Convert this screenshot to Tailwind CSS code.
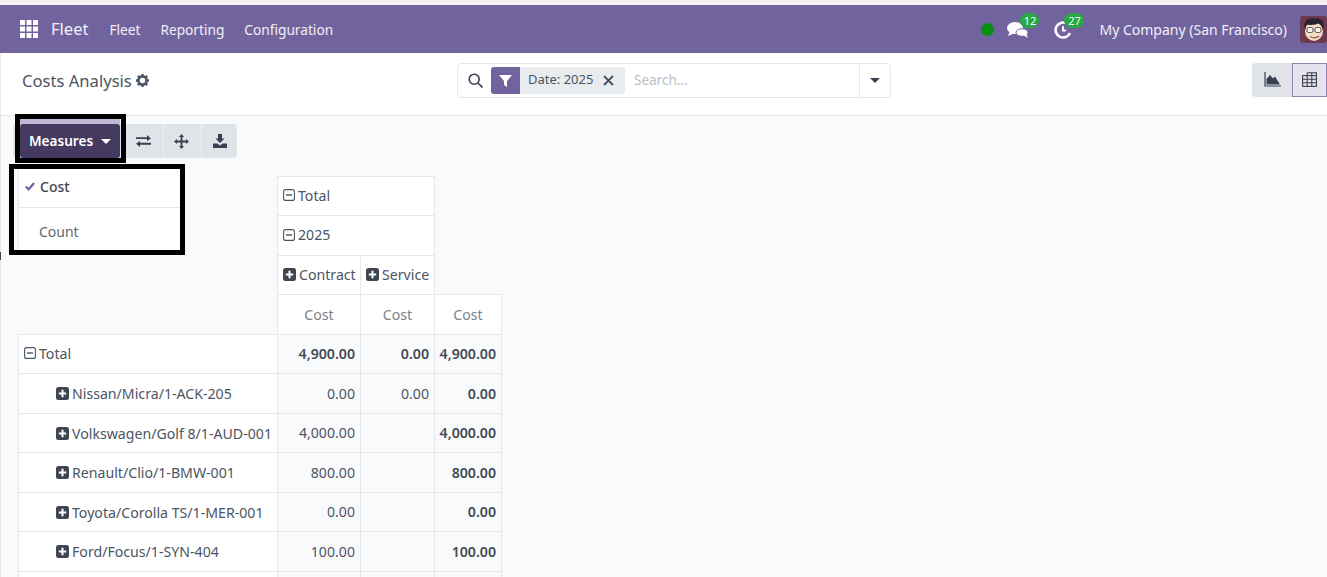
<!DOCTYPE html>
<html><head><meta charset="utf-8">
<script src="https://cdn.jsdelivr.net/npm/@tailwindcss/browser@4"></script>
</head>
<body class="m-0 bg-[#f9fafb]">
<div class="relative w-[1327px] h-[577px] overflow-hidden flex flex-col font-['Noto_Sans','Open_Sans',sans-serif] text-[14px] text-[#4b5563] bg-[#f9fafb]">
  <div class="h-[5px] shrink-0 bg-[#f3f2f0]"></div>
  <!-- navbar -->
  <header class="h-[48px] shrink-0 bg-[#71639e] flex items-center text-white pl-[20px]">
    <svg class="w-[18px] h-[18px] shrink-0" viewBox="0 0 18 18" fill="#fff"><rect x="0" y="0" width="5" height="5"/><rect x="6.5" y="0" width="5" height="5"/><rect x="13" y="0" width="5" height="5"/><rect x="0" y="6.5" width="5" height="5"/><rect x="6.5" y="6.5" width="5" height="5"/><rect x="13" y="6.5" width="5" height="5"/><rect x="0" y="13" width="5" height="5"/><rect x="6.5" y="13" width="5" height="5"/><rect x="13" y="13" width="5" height="5"/></svg>
    <span class="ml-[13px] mt-[1px] text-[16.5px] text-white/90">Fleet</span>
    <nav class="ml-[21px] mt-[2px] flex gap-[20px] text-[13.7px] text-white/90"><span>Fleet</span><span>Reporting</span><span>Configuration</span></nav>
    <div class="ml-auto flex items-center h-full">
      <span class="w-[13px] h-[13px] rounded-full bg-[#0a8f14]"></span>
      <div class="relative ml-[13px] w-[22px] h-[18px] mt-[1px]">
        <svg class="w-[22px] h-[18px]" viewBox="0 0 22 18" fill="#fff"><ellipse cx="8" cy="7" rx="8" ry="6"/><path d="M3 10 L1 15 L8 12Z"/><ellipse cx="15" cy="11.5" rx="6" ry="3.8" fill="#fff" stroke="#71639e" stroke-width="1"/><path d="M16 14 L21 17 L19 12Z"/></svg>
        <span class="absolute left-[13px] top-[-8px] w-[19px] h-[15px] rounded-full bg-[#28a745] text-[11px] leading-[15px] text-center">12</span>
      </div>
      <div class="relative ml-[25px] w-[18px] h-[18px] mt-[1px]">
        <svg class="w-[18px] h-[18px]" viewBox="0 0 18 18" fill="none" stroke="#fff"><path d="M12.5 2.3 A7.5 7.5 0 1 0 16 12" stroke-width="2.6"/><path d="M9 5 V9.5 H12" stroke-width="1.8"/></svg>
        <span class="absolute left-[10px] top-[-8px] w-[20px] h-[15px] rounded-full bg-[#28a745] text-[11px] leading-[15px] text-center">27</span>
      </div>
      <span class="ml-[27px] text-[14px] text-white/90">My Company (San Francisco)</span>
      <svg class="ml-[13px] w-[27px] h-[27px] shrink-0" viewBox="0 0 27 27"><rect width="27" height="27" rx="3" fill="#6b3a4e"/><ellipse cx="14" cy="15" rx="9" ry="10" fill="#f6dcc4"/><path d="M5 14 C2 4 9 1 14 2.5 C21 1 26 6 23 14 C22 10 20 8 18 7.5 C14 9.5 8 9 7 8.5 C6 10 5.5 12 5 14Z" fill="#2a2230"/><rect x="7" y="11.5" width="6" height="5" rx="1.5" fill="#fff" fill-opacity=".6" stroke="#555" stroke-width="1"/><rect x="15" y="11.5" width="6" height="5" rx="1.5" fill="#fff" fill-opacity=".6" stroke="#555" stroke-width="1"/><path d="M10 20.5 Q15 23.5 19 20" stroke="#a05040" stroke-width="1.2" fill="none"/></svg>
    </div>
  </header>
  <!-- control panel -->
  <div class="h-[63px] shrink-0 bg-white border-b border-[#e5e7eb] flex items-center pl-[22px] pb-[8px]">
    <span class="w-[109px] mt-[2px] whitespace-nowrap text-[16.6px] text-[#4b5563]">Costs Analysis</span>
    <svg class="ml-[5px] mt-[1px] w-[13px] h-[13px]" viewBox="0 0 14 14"><circle cx="7" cy="7" r="4.4" fill="none" stroke="#4b5563" stroke-width="2.8"/><g stroke="#4b5563" stroke-width="2.6"><path d="M7 0V3"/><path d="M7 11V14"/><path d="M0 7H3"/><path d="M11 7H14"/><path d="M2 2L4 4"/><path d="M10 10L12 12"/><path d="M2 12L4 10"/><path d="M10 4L12 2"/></g></svg>
    <div class="ml-[308px] w-[434px] h-[35px] bg-white border border-[#e5e7eb] rounded-[4px] flex items-center">
      <svg class="ml-[10px] w-[15px] h-[15px]" viewBox="0 0 15 15" fill="none" stroke="#374151" stroke-width="1.6"><circle cx="6.2" cy="6.2" r="5"/><path d="M10 10L14.5 14.5"/></svg>
      <div class="ml-[8px] h-[27px] flex items-stretch rounded-[3px] overflow-hidden">
        <span class="w-[29px] bg-[#71639e] flex items-center justify-center"><svg class="w-[13px] h-[13px]" viewBox="0 0 13 13" fill="#fff"><path d="M0 1H13L8 7V13L5 11V7Z"/></svg></span>
        <span class="w-[105px] bg-[#e9ecef] flex items-center pl-[8px] text-[13px] text-[#4b5563]">Date: 2025<svg class="ml-[10px] w-[11px] h-[11px]" viewBox="0 0 11 11" stroke="#4b5563" stroke-width="2"><path d="M1 1L10 10M10 1L1 10"/></svg></span>
      </div>
      <span class="ml-[9px] text-[13.5px] text-[#b8bdc4]">Search...</span>
      <div class="ml-auto w-[31px] h-full border-l border-[#e5e7eb] flex items-center justify-center">
        <span class="w-0 h-0 border-x-[5px] border-x-transparent border-t-[5px] border-t-[#374151]"></span>
      </div>
    </div>
    <div class="ml-auto flex h-[34px] mt-[-1px]">
      <span class="w-[40px] bg-[#e0e3e8] rounded-l-[4px] flex items-center justify-center"><svg class="w-[17px] h-[15px]" viewBox="0 0 17 15"><path d="M1 0V14H17" fill="none" stroke="#374151" stroke-width="1.2"/><path d="M2.5 12.5V7L6 3L9 6.5L11 4.5L16 12.5Z" fill="#374151"/></svg></span>
      <span class="w-[35px] bg-[#e6e3ef] border border-[#8f84b5] flex items-center justify-center"><svg class="w-[15px] h-[15px]" viewBox="0 0 15 15" fill="none" stroke="#374151" stroke-width="1.1"><rect x=".6" y="3.6" width="13.8" height="10.8"/><path d="M.6 7.2H14.4M.6 10.8H14.4M5.2 .8V14.4M9.8 .8V14.4M5.2 .8H14.4V3.6"/></svg></span>
    </div>
  </div>
  <!-- toolbar -->
  <div class="shrink-0 pl-[13px] pt-[8px] flex">
    <div class="h-[34px] flex gap-[2px] rounded-[4px] bg-[#e0e3e8] overflow-hidden text-[#374151]">
      <span class="ml-[7px] w-[100px] bg-[#443a5f] rounded-[3px] flex items-center justify-center font-semibold text-[13.6px] text-white">Measures<span class="ml-[8px] w-0 h-0 border-x-[5px] border-x-transparent border-t-[5px] border-t-white"></span></span>
      <span class="w-[35px] ml-[4px] flex items-center justify-center"><svg class="w-[15px] h-[12px]" viewBox="0 0 15 12" fill="#374151"><path d="M0 2.2H11V0L15 3.4L11 6V4H0Z"/><path d="M15 7.8H4V6L0 8.8L4 12V9.7H15Z"/></svg></span>
      <span class="w-[36px] border-l border-[#f0f1f3] flex items-center justify-center"><svg class="w-[15px] h-[15px]" viewBox="0 0 15 15" fill="#374151"><path d="M7.5 0L10 3H8.4V6.6H12V5L15 7.5L12 10V8.4H8.4V12H10L7.5 15L5 12H6.6V8.4H3V10L0 7.5L3 5V6.6H6.6V3H5Z"/></svg></span>
      <span class="w-[36px] border-l border-[#f0f1f3] flex items-center justify-center"><svg class="w-[14px] h-[14px]" viewBox="0 0 14 14" fill="#374151"><path d="M5 0H9V4.5H11.5L7 9L2.5 4.5H5Z"/><path d="M0 9.5H4.5L7 11.5L9.5 9.5H14V14H0Z"/></svg></span>
    </div>
  </div>
  <!-- pivot -->
  <div class="pl-[18px] pt-[17.5px]">
    <table class="border-collapse table-fixed w-[483px] text-[14.15px]">
      <colgroup><col class="w-[259px]"><col class="w-[83px]"><col class="w-[74px]"><col class="w-[67px]"></colgroup>
      <thead class="font-normal">
        <tr class="h-[39.5px]"><th rowspan="4" class="border-b border-[#e5e7eb] font-normal"></th><td colspan="2" class="border border-[#e5e7eb] bg-white pl-[5px]"><span class="inline-flex items-center gap-[3px]"><svg class="w-[12px] h-[12px]" viewBox="0 0 12 12" fill="none" stroke="#4b5563" stroke-width="1.1"><rect x=".6" y=".6" width="10.8" height="10.8" rx="2"/><path d="M3 6H9" stroke-width="1.4"/></svg>Total</span></td><td></td></tr>
        <tr class="h-[39.5px]"><td colspan="2" class="border border-[#e5e7eb] bg-white pl-[5px]"><span class="inline-flex items-center gap-[3px]"><svg class="w-[12px] h-[12px]" viewBox="0 0 12 12" fill="none" stroke="#4b5563" stroke-width="1.1"><rect x=".6" y=".6" width="10.8" height="10.8" rx="2"/><path d="M3 6H9" stroke-width="1.4"/></svg>2025</span></td><td></td></tr>
        <tr class="h-[39.5px]"><td class="border border-[#e5e7eb] bg-white pl-[5px] whitespace-nowrap"><span class="inline-flex items-center gap-[3px]"><svg class="w-[13px] h-[13px]" viewBox="0 0 13 13"><rect width="13" height="13" rx="2.5" fill="#3f4650"/><path d="M6.5 2.8V10.2M2.8 6.5H10.2" stroke="#fff" stroke-width="2"/></svg>Contract</span></td><td class="border border-[#e5e7eb] bg-white pl-[5px]"><span class="inline-flex items-center gap-[3px]"><svg class="w-[13px] h-[13px]" viewBox="0 0 13 13"><rect width="13" height="13" rx="2.5" fill="#3f4650"/><path d="M6.5 2.8V10.2M2.8 6.5H10.2" stroke="#fff" stroke-width="2"/></svg>Service</span></td><td></td></tr>
        <tr class="h-[39.5px] text-center text-[#7b828a]"><td class="border border-[#e5e7eb] bg-white">Cost</td><td class="border border-[#e5e7eb] bg-white">Cost</td><td class="border border-[#e5e7eb] bg-white">Cost</td></tr>
      </thead>
      <tbody>
        <tr class="h-[39.5px]"><td class="border border-[#e5e7eb] bg-white pl-[5px]"><span class="inline-flex items-center gap-[3px]"><svg class="w-[12px] h-[12px]" viewBox="0 0 12 12" fill="none" stroke="#4b5563" stroke-width="1.1"><rect x=".6" y=".6" width="10.8" height="10.8" rx="2"/><path d="M3 6H9" stroke-width="1.4"/></svg>Total</span></td><td class="border border-[#e5e7eb] text-right pr-[5px] font-semibold text-[#434a54]">4,900.00</td><td class="border border-[#e5e7eb] text-right pr-[5px] font-semibold text-[#434a54]">0.00</td><td class="border border-[#e5e7eb] text-right pr-[5px] font-semibold text-[#434a54]">4,900.00</td></tr>
        <tr class="h-[39.5px]"><td class="border border-[#e5e7eb] bg-white pl-[37px] pt-[2px] whitespace-nowrap"><span class="inline-flex items-center gap-[3px]"><svg class="w-[13px] h-[13px]" viewBox="0 0 13 13"><rect width="13" height="13" rx="2.5" fill="#3f4650"/><path d="M6.5 2.8V10.2M2.8 6.5H10.2" stroke="#fff" stroke-width="2"/></svg>Nissan/Micra/1-ACK-205</span></td><td class="border border-[#e5e7eb] text-right pr-[5px]">0.00</td><td class="border border-[#e5e7eb] text-right pr-[5px]">0.00</td><td class="border border-[#e5e7eb] text-right pr-[5px] font-semibold text-[#434a54]">0.00</td></tr>
        <tr class="h-[39.5px]"><td class="border border-[#e5e7eb] bg-white pl-[37px] pt-[2px] whitespace-nowrap"><span class="inline-flex items-center gap-[3px]"><svg class="w-[13px] h-[13px]" viewBox="0 0 13 13"><rect width="13" height="13" rx="2.5" fill="#3f4650"/><path d="M6.5 2.8V10.2M2.8 6.5H10.2" stroke="#fff" stroke-width="2"/></svg>Volkswagen/Golf 8/1-AUD-001</span></td><td class="border border-[#e5e7eb] text-right pr-[5px]">4,000.00</td><td class="border border-[#e5e7eb]"></td><td class="border border-[#e5e7eb] text-right pr-[5px] font-semibold text-[#434a54]">4,000.00</td></tr>
        <tr class="h-[39.5px]"><td class="border border-[#e5e7eb] bg-white pl-[37px] pt-[2px] whitespace-nowrap"><span class="inline-flex items-center gap-[3px]"><svg class="w-[13px] h-[13px]" viewBox="0 0 13 13"><rect width="13" height="13" rx="2.5" fill="#3f4650"/><path d="M6.5 2.8V10.2M2.8 6.5H10.2" stroke="#fff" stroke-width="2"/></svg>Renault/Clio/1-BMW-001</span></td><td class="border border-[#e5e7eb] text-right pr-[5px]">800.00</td><td class="border border-[#e5e7eb]"></td><td class="border border-[#e5e7eb] text-right pr-[5px] font-semibold text-[#434a54]">800.00</td></tr>
        <tr class="h-[39.5px]"><td class="border border-[#e5e7eb] bg-white pl-[37px] pt-[2px] whitespace-nowrap"><span class="inline-flex items-center gap-[3px]"><svg class="w-[13px] h-[13px]" viewBox="0 0 13 13"><rect width="13" height="13" rx="2.5" fill="#3f4650"/><path d="M6.5 2.8V10.2M2.8 6.5H10.2" stroke="#fff" stroke-width="2"/></svg>Toyota/Corolla TS/1-MER-001</span></td><td class="border border-[#e5e7eb] text-right pr-[5px]">0.00</td><td class="border border-[#e5e7eb]"></td><td class="border border-[#e5e7eb] text-right pr-[5px] font-semibold text-[#434a54]">0.00</td></tr>
        <tr class="h-[39.5px]"><td class="border border-[#e5e7eb] bg-white pl-[37px] pt-[2px] whitespace-nowrap"><span class="inline-flex items-center gap-[3px]"><svg class="w-[13px] h-[13px]" viewBox="0 0 13 13"><rect width="13" height="13" rx="2.5" fill="#3f4650"/><path d="M6.5 2.8V10.2M2.8 6.5H10.2" stroke="#fff" stroke-width="2"/></svg>Ford/Focus/1-SYN-404</span></td><td class="border border-[#e5e7eb] text-right pr-[5px]">100.00</td><td class="border border-[#e5e7eb]"></td><td class="border border-[#e5e7eb] text-right pr-[5px] font-semibold text-[#434a54]">100.00</td></tr>
        <tr class="h-[39.5px]"><td class="border border-[#e5e7eb] bg-white"></td><td class="border border-[#e5e7eb]"></td><td class="border border-[#e5e7eb]"></td><td class="border border-[#e5e7eb]"></td></tr>
      </tbody>
    </table>
  </div>
  <!-- dropdown menu overlay -->
  <div class="absolute left-[18px] top-[169px] w-[162px] h-[81px] bg-white border-l border-[#e5e7eb]">
    <div class="h-[39px] border-b border-[#e5e7eb] flex items-center pl-[6px] pb-[3px] font-medium text-[#3f4650]"><svg class="w-[10px] h-[9px] mr-[5px]" viewBox="0 0 10 9" fill="none" stroke="#71639e" stroke-width="2.2"><path d="M.8 4.5L3.6 7.3L9.2 1"/></svg><span>Cost</span></div>
    <div class="h-[42px] flex items-center pl-[20px] pt-[4px] text-[#5f666e]">Count</div>
  </div>
  <!-- annotation frames -->
  <div class="absolute left-[15px] top-[114px] w-[111px] h-[49px] border-[5px] border-black"></div>
  <div class="absolute left-[9px] top-[164px] w-[176px] h-[91px] border-[5px] border-black"></div>
  <div class="absolute left-[20px] top-[119px] w-[100px] h-[5px] bg-[#c0b8d4]"></div>
  <div class="absolute left-0 top-[53px] w-[1px] h-[524px] bg-[#efe9e1]"></div>
  <div class="absolute left-0 top-[252px] w-[1px] h-[8px] bg-[#444]"></div>
</div>
</body></html>
